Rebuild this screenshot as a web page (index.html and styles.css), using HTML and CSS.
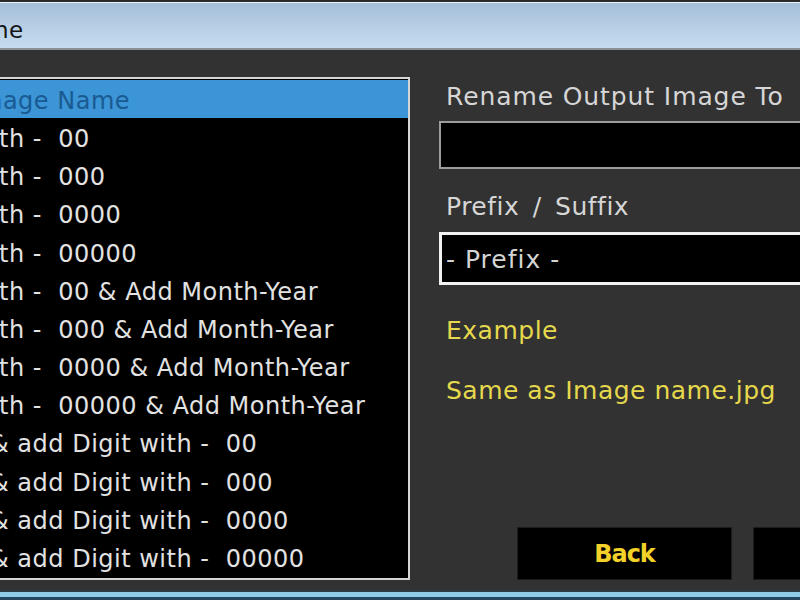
FILE: index.html
```html
<!DOCTYPE html>
<html>
<head>
<meta charset="utf-8">
<link rel="stylesheet" href="styles.css">
</head>
<body>
<div class="window">
  <div class="titlebar"><span class="title">ne</span></div>
  <div class="content">
    <div class="listbox">
      <div class="row selected"><span class="cut-m">mage Name</span></div>
      <div class="row">th -  00</div>
      <div class="row">th -  000</div>
      <div class="row">th -  0000</div>
      <div class="row">th -  00000</div>
      <div class="row">th -  00 &amp; Add Month-Year</div>
      <div class="row">th -  000 &amp; Add Month-Year</div>
      <div class="row">th -  0000 &amp; Add Month-Year</div>
      <div class="row">th -  00000 &amp; Add Month-Year</div>
      <div class="row"><span class="cut-amp">&amp; add Digit with -  00</span></div>
      <div class="row"><span class="cut-amp">&amp; add Digit with -  000</span></div>
      <div class="row"><span class="cut-amp">&amp; add Digit with -  0000</span></div>
      <div class="row"><span class="cut-amp">&amp; add Digit with -  00000</span></div>
    </div>
    <div class="panel">
      <div class="label first">Rename Output Image To</div>
      <div class="textbox"></div>
      <div class="label second">Prefix / Suffix</div>
      <div class="select">- Prefix -</div>
      <div class="note example">Example</div>
      <div class="note sample">Same as Image name.jpg</div>
      <div class="buttons">
        <div class="btn">Back</div>
        <div class="btn next"></div>
      </div>
    </div>
  </div>
  <div class="bottom"></div>
</div>
</body>
</html>
```
FILE: styles.css
```css
html, body {
  margin: 0;
  padding: 0;
  width: 800px;
  height: 600px;
  overflow: hidden;
  background: #323232;
}
body {
  font-family: "DejaVu Sans", "Liberation Sans", sans-serif;
}
.window {
  display: flex;
  flex-direction: column;
  width: 800px;
  height: 600px;
  overflow: hidden;
}
.titlebar {
  height: 50px;
  flex: none;
  box-sizing: border-box;
  border-top: 2px solid #2b2b2b;
  border-bottom: 2px solid #8c9196;
  background: linear-gradient(#a5bed8, #c6dcef);
  box-shadow: inset 0 1px 0 #eef4fa;
  display: flex;
  align-items: center;
}
.title {
  font-size: 23px;
  color: #151515;
  margin-left: -6px;
  padding-top: 9px;
  letter-spacing: 0.5px;
}
.content {
  display: flex;
  height: 540px;
  flex: none;
  padding-top: 27px;
  box-sizing: border-box;
}
.listbox {
  margin-left: -3px;
  width: 413px;
  height: 503px;
  flex: none;
  box-sizing: border-box;
  border: 2px solid #d6d6d6;
  background: #000;
  padding-top: 1px;
  overflow: hidden;
}
.row {
  height: 38.17px;
  box-sizing: border-box;
  padding-top: 4px;
  line-height: 34px;
  font-size: 24px;
  letter-spacing: 0.5px;
  color: #e2e2e2;
  white-space: pre;
}
.row.selected {
  background: #3b95d6;
  color: #1a5a92;
}
.cut-m {
  margin-left: -20px;
}
.cut-amp {
  margin-left: -9px;
}
.panel {
  margin-left: 29px;
  width: 520px;
  flex: none;
  padding-top: 5px;
}
.label {
  margin-left: 7px;
  font-size: 25px;
  line-height: 30px;
  letter-spacing: 0.5px;
  color: #d6d6d6;
}
.label.first {
  letter-spacing: 0.9px;
}
.label.second {
  margin-top: 23px;
  word-spacing: 5px;
}
.textbox {
  margin-top: 9px;
  height: 48px;
  box-sizing: border-box;
  border: 2px solid #9c9c9c;
  background: #000;
}
.select {
  margin-top: 10px;
  height: 53px;
  box-sizing: border-box;
  border: 3px solid #f2f2f2;
  background: #000;
  padding-left: 4px;
  font-size: 25px;
  letter-spacing: 1px;
  line-height: 49px;
  color: #d4d4d4;
}
.note {
  margin-left: 7px;
  font-size: 25px;
  line-height: 30px;
  letter-spacing: 0.5px;
  color: #e6d84c;
}
.note.example {
  margin-top: 31px;
}
.note.sample {
  margin-top: 30px;
}
.buttons {
  display: flex;
  gap: 21px;
  margin-top: 121px;
  margin-left: 78px;
}
.btn {
  width: 215px;
  height: 53px;
  flex: none;
  box-sizing: border-box;
  background: #000;
  border: 1px solid #1c1c1c;
  display: flex;
  align-items: center;
  justify-content: center;
  font-size: 24px;
  letter-spacing: -1px;
  font-weight: bold;
  color: #f2d228;
}
.btn.next {
  width: 150px;
}
.bottom {
  height: 10px;
  flex: none;
  background: linear-gradient(#2d3a45 0 2px, #8fcbe6 2px 7px, #244460 7px);
}
```
